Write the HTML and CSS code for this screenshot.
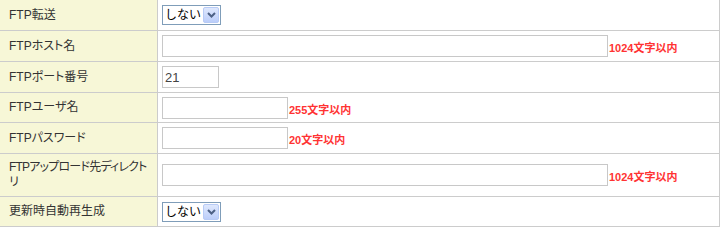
FILE: index.html
```html
<!DOCTYPE html>
<html lang="ja">
<head>
<meta charset="utf-8">
<link rel="stylesheet" href="styles.css">
</head>
<body>
<table class="form">
  <tr class="r30">
    <th>FTP転送</th>
    <td><span class="sel"><span class="sel-text">しない</span><span class="sel-btn"><svg width="9" height="6" viewBox="0 0 9 6"><path d="M1 1 L4.5 4.5 L8 1" fill="none" stroke="#4d6185" stroke-width="2"/></svg></span></span></td>
  </tr>
  <tr class="r30">
    <th>FTPホスト名</th>
    <td><input class="in w-long" type="text"><span class="note">1024文字以内</span></td>
  </tr>
  <tr class="r30">
    <th>FTPポート番号</th>
    <td><input class="in w-port" type="text" value="21"></td>
  </tr>
  <tr class="r29">
    <th>FTPユーザ名</th>
    <td><input class="in w-mid" type="text"><span class="note">255文字以内</span></td>
  </tr>
  <tr class="r30">
    <th>FTPパスワード</th>
    <td><input class="in w-mid" type="password"><span class="note">20文字以内</span></td>
  </tr>
  <tr class="r42">
    <th class="nowrap">FTPアップロード先ディレクト<br>リ</th>
    <td><input class="in w-long" type="text"><span class="note">1024文字以内</span></td>
  </tr>
  <tr class="r29">
    <th>更新時自動再生成</th>
    <td><span class="sel"><span class="sel-text">しない</span><span class="sel-btn"><svg width="9" height="6" viewBox="0 0 9 6"><path d="M1 1 L4.5 4.5 L8 1" fill="none" stroke="#4d6185" stroke-width="2"/></svg></span></span></td>
  </tr>
</table>
</body>
</html>
```
FILE: styles.css
```css
html, body {
  margin: 0;
  padding: 0;
  background: #ffffff;
}
body {
  font-family: "Liberation Sans", "Noto Sans CJK JP", sans-serif;
  font-size: 12px;
  color: #333333;
}
.form {
  border-collapse: collapse;
  width: 720px;
  table-layout: fixed;
}
.form th,
.form td {
  border-right: 1px solid #cccccc;
  border-bottom: 1px solid #cccccc;
  vertical-align: middle;
  padding: 0;
}
.form th {
  width: 138px;
  padding: 0 10px 0 9px;
  background: #f7f7d7;
  font-weight: normal;
  text-align: left;
  line-height: 15px;
  font-feature-settings: "palt";
}
.form th.nowrap {
  white-space: nowrap;
  letter-spacing: -0.8px;
}
.form td {
  padding-left: 4px;
  white-space: nowrap;
}
.r30 th, .r30 td { height: 30px; }
.r29 th, .r29 td { height: 29px; }
.r42 th, .r42 td { height: 42px; }

.in {
  box-sizing: border-box;
  height: 22px;
  border: 1px solid #c8c8c8;
  padding: 0 2px;
  margin: 0;
  font-family: "Liberation Sans", "Noto Sans CJK JP", sans-serif;
  font-size: 13px;
  color: #444444;
  vertical-align: middle;
  background: #ffffff;
  outline: none;
}
.w-long { width: 446px; }
.w-port { width: 57px; }
.w-mid { width: 126px; }

.note {
  display: inline-block;
  vertical-align: middle;
  margin-left: 1px;
  margin-top: 2px;
  font-size: 11px;
  font-weight: bold;
  color: #ff3333;
}

.sel {
  box-sizing: border-box;
  display: inline-flex;
  align-items: center;
  justify-content: space-between;
  width: 59px;
  height: 20px;
  border: 1px solid #7f9db9;
  background: #ffffff;
  vertical-align: middle;
}
.sel-text {
  padding-left: 2px;
  font-size: 12px;
  color: #000000;
  line-height: 16px;
}
.sel-btn {
  box-sizing: border-box;
  width: 16px;
  height: 16px;
  margin-right: 1px;
  border: 1px solid #b8cbf6;
  border-radius: 2px;
  background: linear-gradient(#dfe8fd, #bccefa);
  display: flex;
  align-items: center;
  justify-content: center;
}
```
